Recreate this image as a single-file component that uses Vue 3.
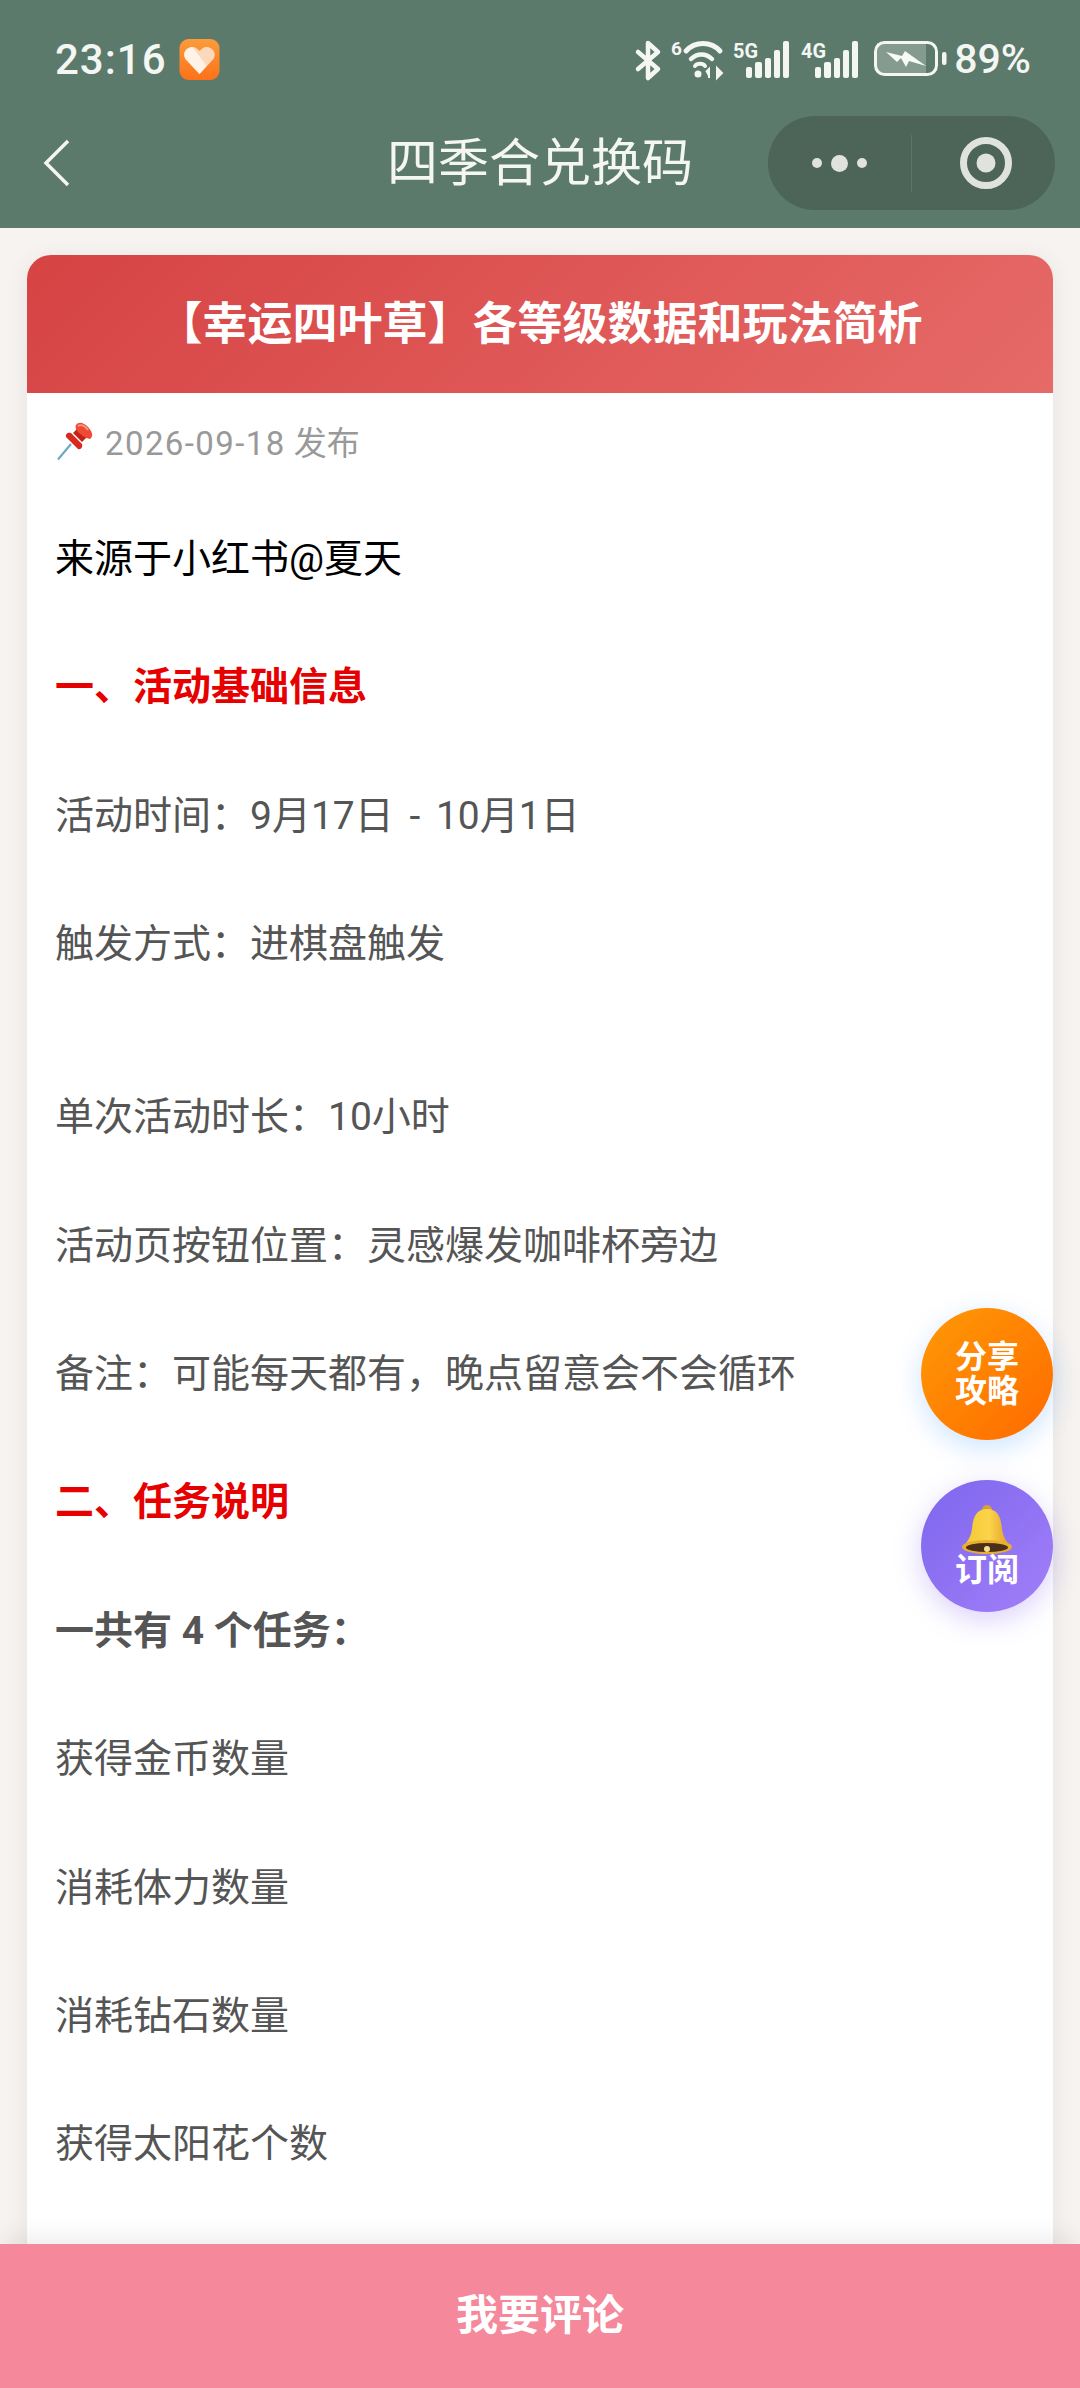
<script setup>
const lines = [
  { text: '来源于小红书@夏天', kind: 'black' },
  { text: '一、活动基础信息', kind: 'red' },
  { text: '活动时间：9月17日 - 10月1日', kind: 'wide' },
  { text: '触发方式：进棋盘触发', kind: 'gap' },
  { text: '单次活动时长：10小时' },
  { text: '活动页按钮位置：灵感爆发咖啡杯旁边' },
  { text: '备注：可能每天都有，晚点留意会不会循环' },
  { text: '二、任务说明', kind: 'red' },
  { text: '一共有 4 个任务：', kind: 'strong' },
  { text: '获得金币数量' },
  { text: '消耗体力数量' },
  { text: '消耗钻石数量' },
  { text: '获得太阳花个数' }
]
const bars = [
  { x: 745, y: 67, w: 6 },
  { x: 754, y: 62, w: 7 },
  { x: 764, y: 58, w: 6 },
  { x: 773, y: 50, w: 6 },
  { x: 782, y: 41, w: 6 }
]
</script>

<template>
  <div class="page">
    <header class="top">
      <div class="status">
        <div class="status-left">
          <span class="clock">23:16</span>
          <svg class="app-icon" width="41" height="41" viewBox="0 0 40 41">
            <defs>
              <linearGradient id="appBg" x1="0" y1="0" x2="0" y2="1">
                <stop offset="0" stop-color="#fb9c3a" />
                <stop offset="1" stop-color="#fd7119" />
              </linearGradient>
            </defs>
            <rect width="40" height="41" rx="9" fill="url(#appBg)" />
            <path d="M20 35 L6 20 C2 13 8 8 13 8 C16 8 18 10 20 12 C22 10 24 8 27 8 C32 8 38 13 34 20 Z" fill="#fcd9bb" />
            <path d="M20 35 L6 20 C2 13 8 8 13 8 L27 27 Z" fill="#fff3e8" />
          </svg>
        </div>
        <div class="status-right">
          <svg class="status-icons" width="326" height="46" viewBox="630 36 326 46">
            <path d="M637 52 L657 69 L647 78 L647 43 L657 52 L637 69" fill="none" stroke="#f3f6f3" stroke-width="4.500" stroke-linejoin="round" stroke-linecap="round" />
            <text x="670" y="55" class="tiny">6</text>
            <g fill="none" stroke="#f3f6f3" stroke-linecap="round">
              <path d="M685 51 C694 41 710 41 719 51" stroke-width="5" />
              <path d="M690 59 C696 53 705 53 711 59" stroke-width="4.500" />
              <path d="M694 66 C696 63 702 63 704 66" stroke-width="4" />
            </g>
            <circle cx="697" cy="74" r="3.500" fill="#f3f6f3" />
            <path d="M708 78 V69 L705 72 M716 68 V78 L721 73 Z" fill="#f3f6f3" stroke="#f3f6f3" stroke-width="2" />
            <text x="732" y="58" class="net" textLength="25" lengthAdjust="spacingAndGlyphs">5G</text>
            <rect v-for="b in bars" :key="'a' + b.x" :x="b.x" :y="b.y" :width="b.w" :height="78 - b.y" rx="2" fill="#f3f6f3" />
            <text x="800" y="58" class="net" textLength="25" lengthAdjust="spacingAndGlyphs">4G</text>
            <g transform="translate(69 0)">
              <rect v-for="b in bars" :key="'b' + b.x" :x="b.x" :y="b.y" :width="b.w" :height="78 - b.y" rx="2" fill="#f3f6f3" />
            </g>
            <rect x="876" y="43" width="49" height="30" fill="#fff" fill-opacity=".25" />
            <rect x="874.500" y="42.500" width="61" height="32" rx="9" fill="none" stroke="#f3f6f3" stroke-width="3" />
            <rect x="941" y="52" width="4.500" height="13" rx="2" fill="#f3f6f3" />
            <path d="M885 52 L901 56 L904 51 L925 66 L908 61 L905 67 L900 58 L896 62 Z" fill="#f7faf7" />
          </svg>
          <span class="battery-text">89%</span>
        </div>
      </div>
      <nav class="nav">
        <svg class="back" width="30" height="50" viewBox="0 0 30 50">
          <path d="M25 3 L3 25 L25 47" fill="none" stroke="#f4f6f4" stroke-width="3.500" />
        </svg>
        <h1 class="nav-title">四季合兑换码</h1>
        <div class="capsule">
          <div class="capsule-more">
            <i class="dot"></i><i class="dot big"></i><i class="dot"></i>
          </div>
          <div class="capsule-rule"></div>
          <div class="capsule-close">
            <svg width="54" height="54" viewBox="0 0 54 54">
              <circle cx="27" cy="27" r="22.500" fill="none" stroke="#e0e2e0" stroke-width="7" />
              <circle cx="27" cy="27" r="9.500" fill="#e0e2e0" />
            </svg>
          </div>
        </div>
      </nav>
    </header>

    <main class="scroller">
      <article class="card">
        <div class="card-head">【幸运四叶草】各等级数据和玩法简析</div>
        <div class="card-body">
          <div class="meta">
            <svg class="pin" width="36" height="38" viewBox="0 0 36 38">
              <path d="M1 37.500 L14 22" stroke="#6fa8c0" stroke-width="2.200" fill="none" />
              <path d="M9 15 L21 27 C24 28 26 25 25 22 L14 11 C11 10 8 12 9 15 Z" fill="#d8291f" />
              <path d="M16 11 L25 20 L30 15 L21 6 Z" fill="#c42218" />
              <path d="M19 3 C22 -1 27 1 31 5 C35 9 37 14 33 17 C30 17 24 13 21 10 C19 8 18 5 19 3 Z" fill="#ee4a35" />
              <path d="M21 4 C24 2 28 4 31 8" stroke="#f89a85" stroke-width="2" fill="none" />
            </svg>
            <span><span class="date">2026-09-18</span> 发布</span>
          </div>
          <p v-for="line in lines" :key="line.text" class="line" :class="line.kind">{{ line.text }}</p>
        </div>
      </article>
    </main>

    <footer class="comment-bar">我要评论</footer>

    <button class="fab fab-share" type="button"><span>分享</span><span>攻略</span></button>
    <button class="fab fab-sub" type="button">
      <svg class="bell" width="52" height="50" viewBox="0 0 52 50">
        <defs>
          <linearGradient id="bellGold" x1="0" y1="0" x2="1" y2="0">
            <stop offset="0" stop-color="#f3c733" />
            <stop offset=".55" stop-color="#fbd44a" />
            <stop offset="1" stop-color="#dc9b28" />
          </linearGradient>
        </defs>
        <circle cx="26" cy="5" r="5" fill="#d8a03a" />
        <path d="M26 4 C14 4 12 14 11 24 C10 32 6 37 2 42 L50 42 C46 37 42 32 41 24 C40 14 38 4 26 4 Z" fill="url(#bellGold)" />
        <ellipse cx="26" cy="42" rx="25" ry="7" fill="#e8b02e" />
        <ellipse cx="26" cy="42.500" rx="21" ry="4.500" fill="#4a3018" />
        <circle cx="26" cy="44" r="3" fill="#f5e090" />
      </svg>
      <span class="sub-text">订阅</span>
    </button>
  </div>
</template>

<style>
html, body { margin: 0; padding: 0; }
</style>

<style scoped>
.page {
  position: relative;
  width: 1080px;
  height: 2388px;
  overflow: hidden;
  display: flex;
  flex-direction: column;
  background: #f6f3f0;
  font-family: Roboto, "Noto Sans CJK SC", sans-serif;
}
.top { height: 228px; background: #5c7a6b; flex: none; }
.status {
  height: 108px;
  display: flex;
  align-items: center;
  justify-content: space-between;
  padding: 10px 49px 0 55px;
  box-sizing: border-box;
  color: #f3f6f3;
}
.status-left, .status-right { display: flex; align-items: center; }
.clock { font-size: 42px; font-weight: 500; width: 124px; letter-spacing: 1px; }
.app-icon { display: block; }
.status-icons { display: block; margin-right: -3px; }
.tiny { font: 700 19px Roboto, sans-serif; fill: #f3f6f3; }
.net { font: 700 21px Roboto, sans-serif; fill: #f3f6f3; }
.battery-text { font-size: 41px; font-weight: 500; }
.nav {
  position: relative;
  height: 120px;
  display: flex;
  align-items: center;
  padding: 0 25px 10px 43px;
  box-sizing: border-box;
}
.back { display: block; }
.nav-title {
  position: absolute;
  left: 0;
  right: 0;
  top: 22px;
  margin: 0;
  text-align: center;
  color: #f4f6f4;
  font-size: 51px;
  font-weight: 400;
  line-height: 68px;
}
.capsule {
  margin-left: auto;
  width: 287px;
  height: 94px;
  border-radius: 47px;
  background: #4d6458;
  display: flex;
  align-items: center;
}
.capsule-more { width: 143px; display: flex; align-items: center; justify-content: center; gap: 9px; }
.dot { display: block; width: 10px; height: 10px; border-radius: 50%; background: #e0e2e0; }
.dot.big { width: 17px; height: 17px; }
.capsule-rule { width: 1px; height: 57px; background: #5d7468; }
.capsule-close { flex: 1; display: flex; align-items: center; justify-content: center; padding-left: 4px; }
.capsule-close svg { display: block; }
.scroller { flex: 1; min-height: 0; overflow: hidden; padding: 27px 27px 0; }
.card {
  min-height: 2200px;
  background: #fff;
  border-radius: 24px 24px 0 0;
  box-shadow: 0 4px 24px rgba(0, 0, 0, .07);
}
.card-head {
  height: 138px;
  border-radius: 24px 24px 0 0;
  background: linear-gradient(135deg, #d64343, #e66a68);
  color: #fff;
  font-size: 45px;
  font-weight: 700;
  line-height: 140px;
  text-align: center;
}
.card-body { padding: 26px 28px 0; }
.meta {
  height: 44px;
  display: flex;
  align-items: center;
  gap: 12px;
  margin-bottom: 63px;
  color: #999;
  font-size: 33px;
}
.date { letter-spacing: 1.4px; }
.pin { display: block; flex: none; margin-left: 2px; }
.line {
  margin: 0 0 62.4px;
  font-size: 39px;
  line-height: 66px;
  color: #555;
}
.line.black { color: #000; }
.line.red { color: #e60000; font-weight: 700; }
.line.strong { font-weight: 700; }
.line.gap { margin-bottom: 107px; }
.line.wide { word-spacing: 6px; }
.comment-bar {
  position: relative;
  flex: none;
  height: 144px;
  background: #f5889b;
  color: #fff;
  font-size: 42px;
  font-weight: 700;
  line-height: 144px;
  text-align: center;
  box-shadow: 0 -6px 24px rgba(0, 0, 0, .08);
}
.fab {
  position: absolute;
  right: 27px;
  width: 132px;
  height: 132px;
  padding: 0;
  border: 0;
  border-radius: 50%;
  display: flex;
  flex-direction: column;
  align-items: center;
  justify-content: center;
  color: #fff;
  font-family: inherit;
  font-size: 32px;
  font-weight: 700;
  line-height: 34px;
}
.fab-share {
  top: 1308px;
  background: linear-gradient(135deg, #ff9a05, #ff6a00);
  box-shadow: 0 8px 28px rgba(0, 122, 255, .2);
}
.fab-sub {
  top: 1480px;
  background: linear-gradient(135deg, #7d66ee, #a27ff8);
  box-shadow: 0 8px 28px rgba(125, 90, 240, .28);
}
.bell { display: block; }
.sub-text { margin-top: -2px; }
</style>
